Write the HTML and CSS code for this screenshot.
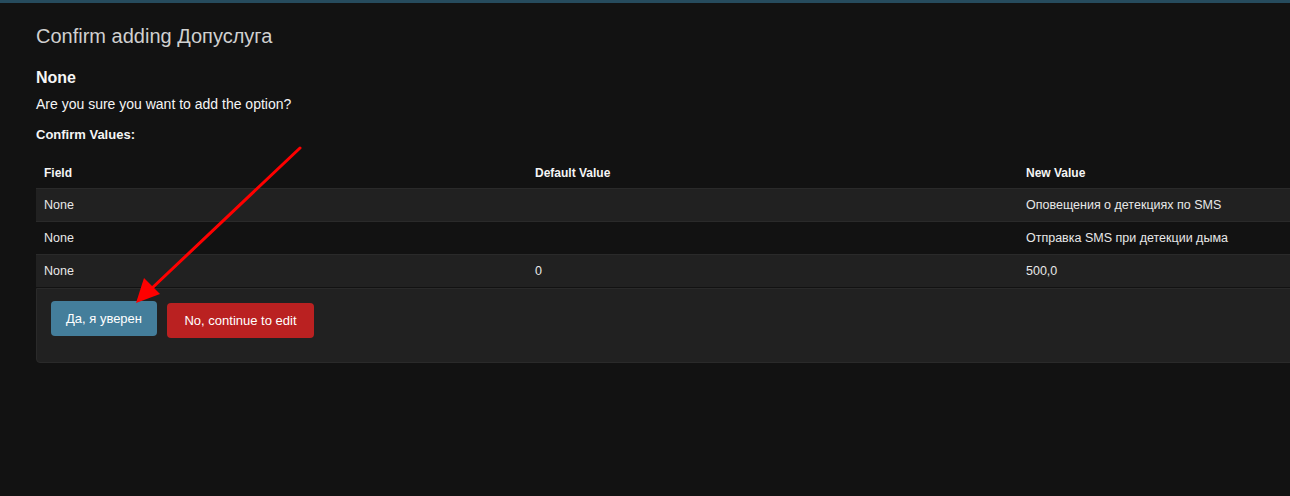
FILE: index.html
```html
<!DOCTYPE html>
<html lang="ru">
<head>
<meta charset="utf-8">
<title>Confirm adding Допуслуга</title>
<link rel="stylesheet" href="styles.css">
</head>
<body>
<div class="topbar"></div>
<main class="content">
  <h1 class="title">Confirm adding Допуслуга</h1>
  <h2 class="subtitle">None</h2>
  <p class="question">Are you sure you want to add the option?</p>
  <h3 class="label">Confirm Values:</h3>
  <table class="values">
    <thead>
      <tr><th>Field</th><th>Default Value</th><th>New Value</th></tr>
    </thead>
    <tbody>
      <tr class="odd"><td>None</td><td></td><td>Оповещения о детекциях по SMS</td></tr>
      <tr><td>None</td><td></td><td>Отправка SMS при детекции дыма</td></tr>
      <tr class="odd"><td>None</td><td>0</td><td>500,0</td></tr>
    </tbody>
  </table>
  <div class="submit-row">
    <button class="btn btn-yes">Да, я уверен</button>
    <button class="btn btn-no">No, continue to edit</button>
  </div>
</main>
<svg class="arrow" width="320" height="320" viewBox="0 0 320 320">
  <line x1="300" y1="148" x2="150" y2="290" stroke="#ff0000" stroke-width="3" stroke-linecap="round"/>
  <polygon points="136,303 144,278 160,294" fill="#ff0000"/>
</svg>
</body>
</html>
```
FILE: styles.css
```css
html, body {
  margin: 0;
  padding: 0;
  background: #121212;
  overflow: hidden;
  height: 100%;
}
body {
  font-family: "Liberation Sans", Arial, sans-serif;
  color: #eeeeee;
  position: relative;
}
.topbar {
  height: 3px;
  background: #264b5d;
}
.content {
  padding: 19px 0 0 36px;
}
.title {
  margin: 0 0 18px 0;
  font-size: 20px;
  font-weight: 300;
  color: #d0d0d0;
  line-height: 28px;
}
.subtitle {
  margin: 0 0 6px 0;
  font-size: 16px;
  font-weight: bold;
  line-height: 20px;
  color: #f5f5f5;
}
.question {
  margin: 0 0 12px 0;
  font-size: 14px;
  line-height: 20px;
  color: #f5f5f5;
}
.label {
  margin: 0 0 13px 0;
  font-size: 13px;
  font-weight: bold;
  line-height: 18px;
  color: #f5f5f5;
}
.values {
  width: 1473px;
  border-collapse: collapse;
  table-layout: fixed;
  font-size: 13px;
}
.values th {
  text-align: left;
  font-size: 12px;
  font-weight: bold;
  height: 31px;
  padding: 0 8px;
  color: #f5f5f5;
}
.values td {
  height: 32px;
  padding: 0 8px;
  border-top: 1px solid #2a2a2a;
  color: #e8e8e8;
  font-size: 12.5px;
}
.values tr.odd {
  background: #212121;
}
.submit-row {
  width: 1473px;
  box-sizing: border-box;
  height: 75px;
  margin-top: 1px;
  background: #212121;
  border: 1px solid #2a2a2a;
  border-radius: 0 0 4px 4px;
  padding: 12px 14px;
  display: flex;
  align-items: flex-start;
  gap: 10px;
}
.btn {
  border: none;
  border-radius: 4px;
  color: #ffffff;
  font-family: "Liberation Sans", Arial, sans-serif;
  font-size: 13px;
  height: 35px;
  padding: 0 12px;
  white-space: nowrap;
  cursor: pointer;
}
.btn-yes {
  background: #447e9b;
  width: 106px;
}
.btn-no {
  background: #ba2121;
  margin-top: 2px;
  width: 147px;
}
.arrow {
  position: absolute;
  left: 0;
  top: 0;
  pointer-events: none;
}
```
